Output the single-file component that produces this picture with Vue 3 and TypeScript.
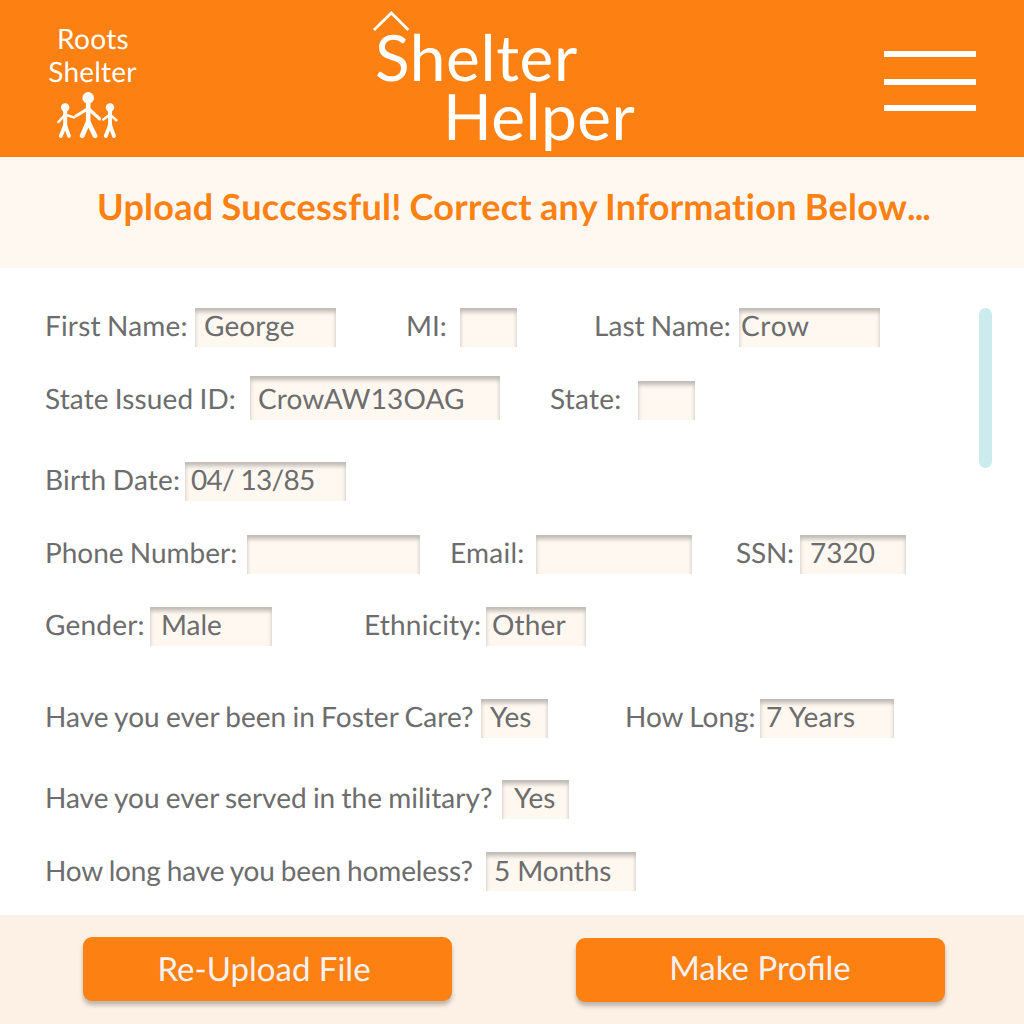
<script setup lang="ts">
import { ref } from 'vue'

interface Field {
  label: string
  value: string
  gap: number
  labelWidth: number
  width: number
  height?: number
  inset: number
  labelTracking?: number
  valueTracking?: number
}

interface Row {
  top: number
  lowered?: boolean
  fields: Field[]
}

const rows = ref<Row[]>([
  {
    top: 0,
    fields: [
      { label: 'First Name:', value: 'George', gap: 0, labelWidth: 150, width: 141, inset: 9, labelTracking: 0.18, valueTracking: 0.1 },
      { label: 'MI:', value: '', gap: 70, labelWidth: 54, width: 57, inset: 4 },
      { label: 'Last Name:', value: 'Crow', gap: 77, labelWidth: 145, width: 141, inset: 2, labelTracking: 0.05, valueTracking: 0.7 },
    ],
  },
  {
    top: 29,
    fields: [
      { label: 'State Issued ID:', value: 'CrowAW13OAG', gap: 0, labelWidth: 205, width: 250, height: 44, inset: 8, labelTracking: 0.1, valueTracking: 0.15 },
      { label: 'State:', value: '', gap: 50, labelWidth: 88, width: 57, inset: 4, labelTracking: 0.25 },
    ],
  },
  {
    top: 42,
    fields: [{ label: 'Birth Date:', value: '04/ 13/85', gap: 0, labelWidth: 140, width: 161, inset: 6, labelTracking: 0.2, valueTracking: -0.7 }],
  },
  {
    top: 34,
    fields: [
      { label: 'Phone Number:', value: '', gap: 0, labelWidth: 202, width: 173, inset: 4 },
      { label: 'Email:', value: '', gap: 30, labelWidth: 86, width: 156, inset: 4, labelTracking: 0.25 },
      { label: 'SSN:', value: '7320', gap: 44, labelWidth: 64, width: 106, inset: 10, labelTracking: -0.25 },
    ],
  },
  {
    top: 33,
    fields: [
      { label: 'Gender:', value: 'Male', gap: 0, labelWidth: 105, width: 122, inset: 11, labelTracking: 0.2 },
      { label: 'Ethnicity:', value: 'Other', gap: 92, labelWidth: 122, width: 100, inset: 6, labelTracking: 0.2, valueTracking: 0.15 },
    ],
  },
  {
    top: 53,
    fields: [
      { label: 'Have you ever been in Foster Care?', value: 'Yes', gap: 0, labelWidth: 436, width: 67, inset: 9, labelTracking: 0.04 },
      { label: 'How Long:', value: '7 Years', gap: 77, labelWidth: 135, width: 134, inset: 6, valueTracking: 0.25 },
    ],
  },
  {
    top: 42,
    fields: [{ label: 'Have you ever served in the military?', value: 'Yes', gap: 0, labelWidth: 457, width: 67, inset: 12, labelTracking: 0.02 }],
  },
  {
    top: 33,
    lowered: true,
    fields: [{ label: 'How long have you been homeless?', value: '5 Months', gap: 0, labelWidth: 441, width: 150, inset: 8, labelTracking: -0.14, valueTracking: -0.1 }],
  },
])

const inputStyle = (field: Field) => {
  const height = field.height ?? 39
  return {
    width: `${field.width}px`,
    height: `${height}px`,
    paddingLeft: `${field.inset}px`,
    paddingTop: `${height - 39}px`,
    letterSpacing: `${field.valueTracking ?? 0}px`,
  }
}
</script>

<template>
  <div class="page">
    <header class="header">
      <div class="shelter">
        <span class="roots">Roots</span>
        <span class="shelter-name">Shelter</span>
        <svg class="people" width="62" height="48" viewBox="0 0 62 48" fill="none" stroke="#fff" stroke-linecap="round" stroke-linejoin="round">
          <g fill="#fff" stroke="none">
            <circle cx="31.2" cy="5.9" r="5.8" />
            <circle cx="8.2" cy="15.5" r="4.2" />
            <circle cx="53" cy="15.5" r="4.2" />
          </g>
          <path d="M31.2 11V30" stroke-width="4.6" stroke-linecap="butt" />
          <path d="M19 24L31.2 16.5L42.5 26.8" stroke-width="3.2" />
          <path d="M25.2 43.8L31.2 30L38 43.8" stroke-width="4.8" />
          <path d="M8.2 19V33M53 19V33" stroke-width="4" stroke-linecap="butt" />
          <path d="M1.4 30L8.2 22.6L16.8 25.4M46.3 27.4L53 22.6L59.4 28.2" stroke-width="2.5" />
          <path d="M3.8 44L8.2 33L12 44M48.8 44L53 33L57 44" stroke-width="3.8" />
        </svg>
      </div>
      <h1 class="brand">
        <svg class="roof" width="37" height="22" viewBox="0 0 37 22" fill="none" stroke="#fff" stroke-width="2.8">
          <path d="M1 20L18.3 3L35.4 20" />
        </svg>
        <span class="brand-top">Shelter</span>
        <span class="brand-bottom">Helper</span>
      </h1>
      <button class="menu" aria-label="Menu"><i /><i /><i /></button>
    </header>

    <section class="notice">
      <h2>Upload Successful! Correct any Information Below<span class="dots">...</span></h2>
    </section>

    <main class="content">
      <form class="form" @submit.prevent>
        <div v-for="(row, r) in rows" :key="r" class="row" :class="{ lowered: row.lowered }" :style="{ marginTop: row.top + 'px' }">
          <label v-for="field in row.fields" :key="field.label" class="field" :style="{ marginLeft: field.gap + 'px' }">
            <span class="label" :style="{ width: field.labelWidth + 'px', letterSpacing: (field.labelTracking ?? 0) + 'px' }">{{ field.label }}</span>
            <input v-model="field.value" type="text" :style="inputStyle(field)" />
          </label>
        </div>
      </form>
      <div class="scroll-thumb" />
    </main>

    <footer class="footer">
      <button class="action">Re-Upload File</button>
      <button class="action second">Make Profile</button>
    </footer>
  </div>
</template>

<style>
body {
  margin: 0;
}
</style>

<style scoped>
.page {
  width: 1024px;
  height: 1024px;
  display: flex;
  flex-direction: column;
  overflow: hidden;
  background: #fff;
  font-family: Lato, 'Liberation Sans', sans-serif;
  color: #6d6d6d;
  text-rendering: geometricPrecision;
}
.header {
  height: 157px;
  flex: none;
  display: flex;
  align-items: flex-start;
  background: #fd8012;
  color: #fff;
}
.shelter {
  width: 90px;
  margin: 22px 0 0 48px;
  display: flex;
  flex-direction: column;
  align-items: center;
  font-size: 28px;
  line-height: 33px;
  letter-spacing: 0.2px;
}
.roots {
  letter-spacing: 0.3px;
}
.shelter-name {
  margin-right: 1px;
}
.people {
  margin: 4px 0 0 -11px;
}
.brand {
  position: relative;
  width: 262px;
  margin: 27px 0 0 237px;
  display: flex;
  flex-direction: column;
  font-size: 64px;
  font-weight: 400;
  line-height: 59px;
  letter-spacing: 0.5px;
}
.brand-top {
  letter-spacing: 0.6px;
}
.brand-bottom {
  margin-left: 68px;
  letter-spacing: 0.4px;
}
.roof {
  position: absolute;
  left: -2px;
  top: -17px;
}
.menu {
  width: 92px;
  margin: 51px 48px 0 auto;
  padding: 0;
  border: 0;
  background: none;
  display: flex;
  flex-direction: column;
  gap: 21px;
}
.menu i {
  height: 6px;
  background: #fff;
}
.menu i:nth-child(2) {
  margin-top: 1px;
  margin-bottom: -1px;
}
.notice {
  display: flow-root;
  height: 111px;
  flex: none;
  background: #fef8f1;
}
.notice h2 {
  margin: 27px 0 0 3px;
  text-align: center;
  font-size: 36px;
  line-height: 44px;
  font-weight: 700;
  font-variant-ligatures: none;
  letter-spacing: 0.28px;
  word-spacing: -1px;
  color: #fd8012;
  white-space: nowrap;
}
.dots {
  letter-spacing: -0.9px;
}
.content {
  height: 647px;
  flex: none;
  display: flex;
  align-items: flex-start;
  justify-content: space-between;
  padding: 40px 32px 0 45px;
  box-sizing: border-box;
}
.form,
.row,
.field {
  display: flex;
}
.form {
  flex-direction: column;
}
.row,
.field {
  align-items: flex-end;
}
.label {
  flex: none;
  height: 39px;
  font-size: 28px;
  line-height: 34px;
  word-spacing: -1px;
  white-space: nowrap;
}
input {
  box-sizing: border-box;
  padding: 0 0 5px;
  border: 0;
  border-radius: 0;
  outline: none;
  background: #fef8f1;
  box-shadow: inset 0 4px 4px rgba(0, 0, 0, 0.25);
  font: 28px/34px Lato, 'Liberation Sans', sans-serif;
  color: #6d6d6d;
  text-rendering: inherit;
}
.lowered .label {
  height: 38px;
}
.lowered input {
  line-height: 35px;
  padding-bottom: 3px;
}
.scroll-thumb {
  width: 13px;
  height: 160px;
  border-radius: 7px;
  background: #cbebef;
}
.footer {
  height: 109px;
  flex: none;
  display: flex;
  align-items: flex-start;
  padding: 22px 79px 0 83px;
  box-sizing: border-box;
  justify-content: space-between;
  background: #fdf0e5;
}
.action {
  width: 369px;
  height: 64px;
  padding: 1px 7px 0 0;
  border: 0;
  border-radius: 9px;
  background: #fd8012;
  box-shadow: 0 4px 4px rgba(0, 0, 0, 0.25);
  font: 33px/41px Lato, 'Liberation Sans', sans-serif;
  color: #f2f2f2;
  text-rendering: inherit;
}
.second {
  margin-top: 1px;
  padding: 0 1px 3px 0;
}
</style>
